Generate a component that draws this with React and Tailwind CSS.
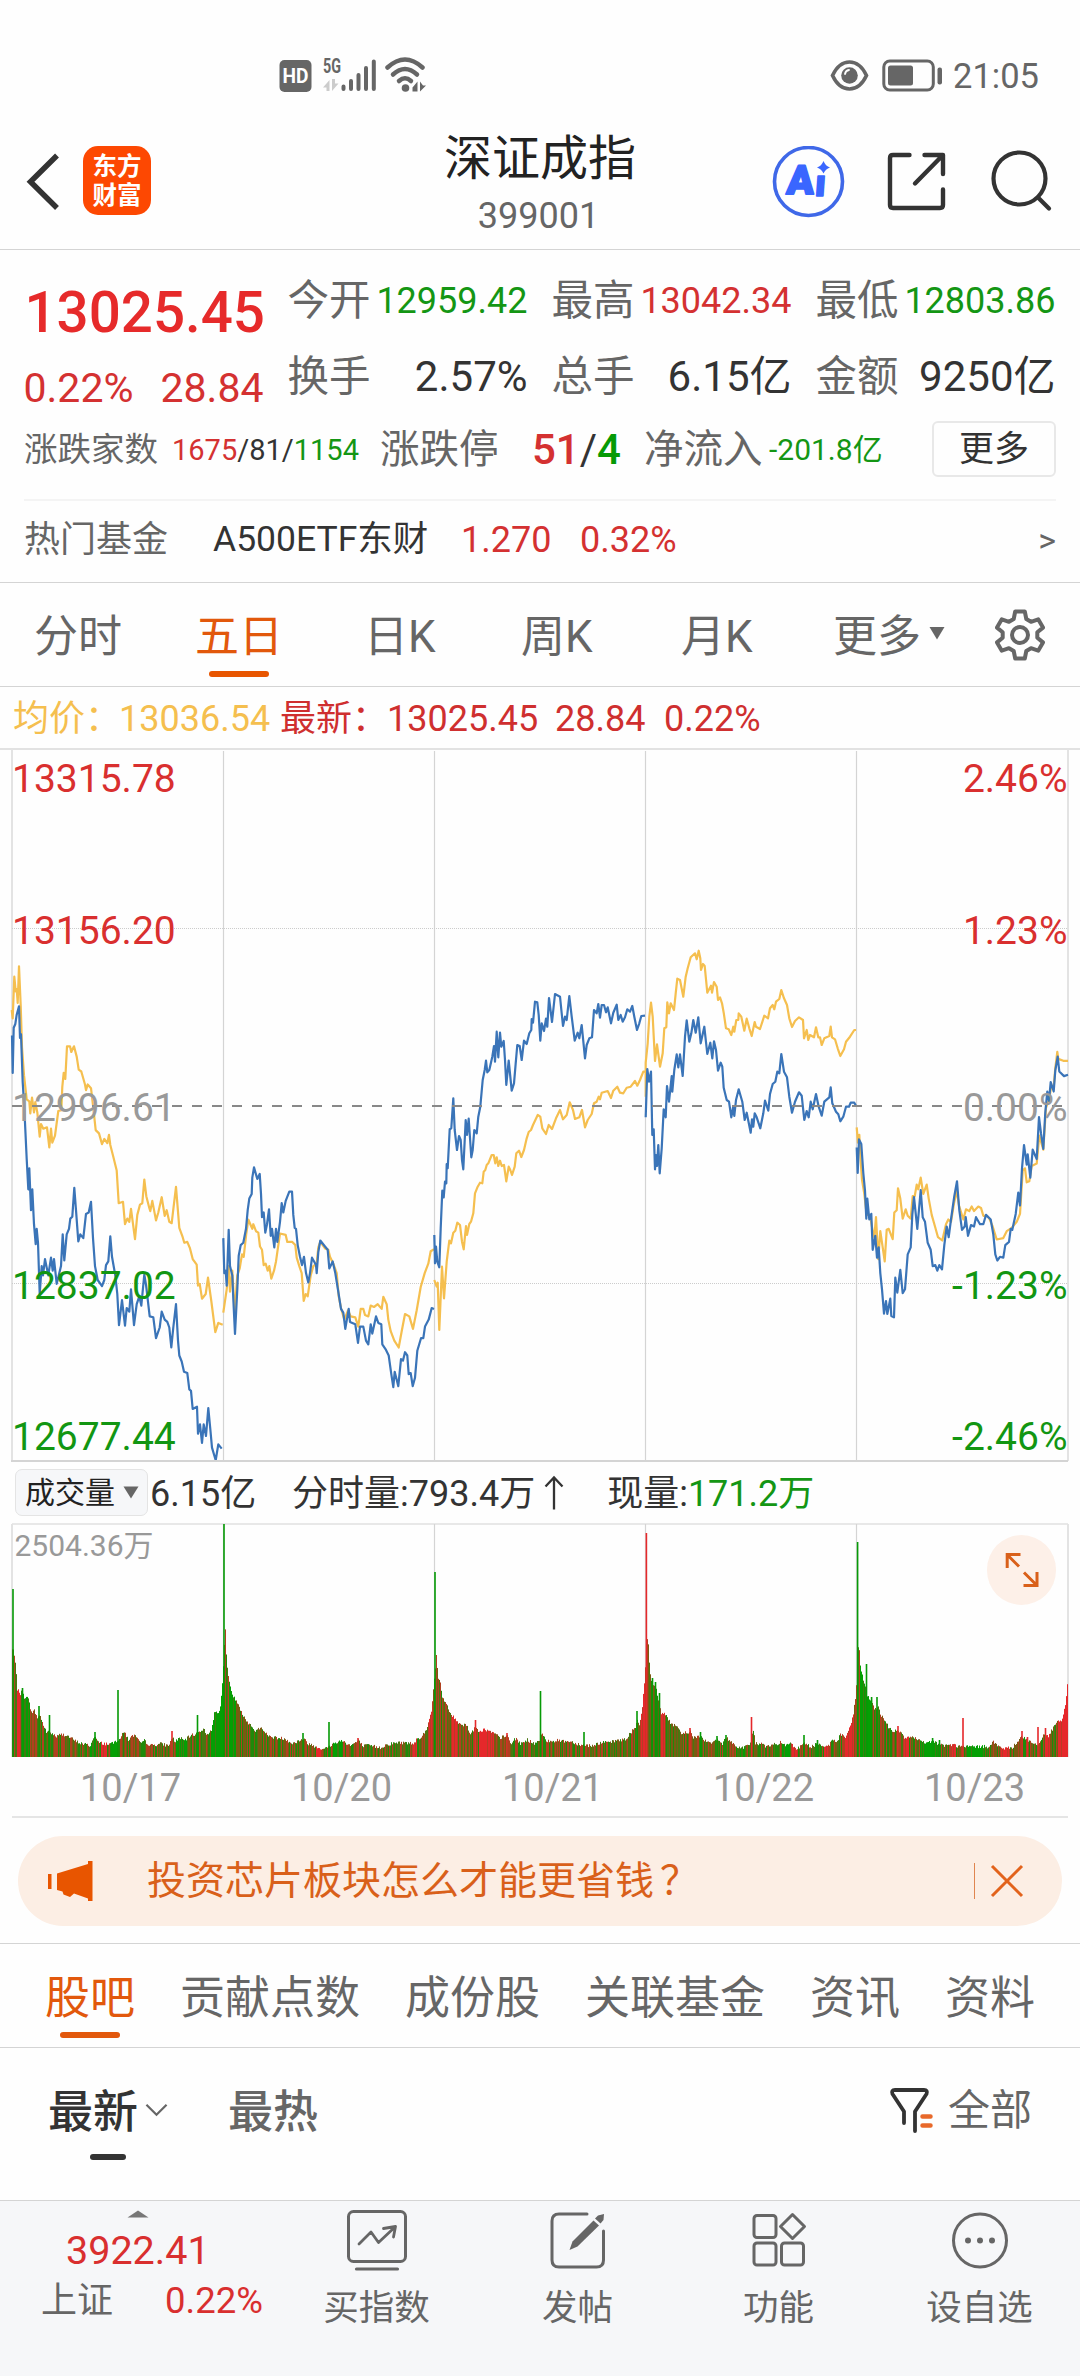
import React from "react";

/* ---------- chart data ---------- */

// Intraday series. Each group has its own sampling grid: [originX, originY, unitsPerPxX, unitsPerPxY].
const GRID_A = [0, 740, 3, 2.148];
const GRID_B = [420, 920, 3, 3];
const GRID_C = [840, 740, 3, 2.148];

const AVERAGE = [
  [GRID_A, "35,580 38,598 43,508 47,540 50,535 53,565 57,486 62,570 66,660 72,720 80,772 88,776 91,802 96,768 102,800 106,778 112,800 119,852 123,825 130,835 141,832 148,875 153,835 157,865 165,850 175,797 184,795 187,745 191,715 196,728 201,658 210,658 214,670 222,658 230,680 236,708 244,712 255,740 258,752 263,740 273,748 280,790 287,838 297,845 306,868 313,857 322,866 327,848 331,870 340,895 350,925 356,995 369,992 375,1040 382,1028 388,1035 393,1007 405,1072 412,1020 420,998 427,995 433,944 439,980 448,1005 451,1012 457,990 468,1032 475,1015 485,982 494,1022 500,1010 508,1035 515,1038 520,1008 528,960 538,1048 548,1068 553,1080 562,1078 570,1092 578,1115 590,1127 594,1172 599,1168 606,1200 617,1190 624,1155 634,1205 646,1272 655,1252 668,1256"],
  [GRID_A, "670,1230 680,1180 686,1130 690,1185 697,1140 704,1230 712,1150 719,1135 726,1105 731,1110 739,1060 745,1030 751,1040 757,1050 760,1040 768,1055 775,1058 780,1088 786,1095 791,1128 797,1125 803,1140 808,1130 814,1157 822,1140 828,1120 834,1090 840,1060 857,1063 862,1078 877,1078 886,1085 890,1112 898,1130 905,1145 911,1205 917,1190 923,1195 932,1150 940,1130 950,1125 955,1090 961,1078 975,1092 985,1095 990,1110 1000,1125 1010,1145 1016,1195 1023,1220 1033,1245 1044,1225 1052,1238 1066,1240 1075,1260 1082,1222 1090,1222 1095,1235 1105,1238 1112,1215 1122,1218 1133,1212 1145,1222 1150,1196 1160,1212 1165,1245 1172,1270 1183,1290 1196,1305 1205,1270 1215,1233 1228,1238 1239,1265 1250,1225 1262,1175 1274,1145 1285,1125 1292,1098 1302,1094"],
  [GRID_B, "43,1080 50,1100 53,1088 58,1230 66,1040 72,1135 80,1025 88,962 93,970 100,938 106,932 112,908 120,915 126,965 131,988 138,918 141,945 148,912 153,905 160,880 165,820 173,800 180,788 187,790 191,755 196,750 200,735 205,730 215,705 221,705 226,730 230,712 235,738 240,722 245,738 252,735 259,784 266,740 271,750 276,765 284,740 289,700 297,692 304,711 312,690 320,655 326,636 333,630 339,615 353,585 361,590 367,625 378,642 386,615 396,627 408,595 420,570 429,598 440,585 449,547 459,570 465,597 478,592 486,570 495,622 503,600 515,582 522,550 530,545 536,530 540,538 545,518 563,513 573,534 580,512 592,500 600,518 610,520 620,503 632,500 645,483 652,497 660,480 670,455 676,455"],
  [GRID_B, "677,530 677,428 683,370 688,290 693,248 698,290 705,423 711,373 720,440 728,400 733,325 739,322 742,247 747,280 752,250 762,270 767,220 772,176 780,180 790,230 797,170 803,145 812,112 825,100 830,118 836,92 841,115 843,150 849,132 854,138 862,218 873,197 876,218 882,186 890,200 894,240 900,232 906,250 911,278 918,325 926,328 934,345 940,320 943,335 949,300 955,300 956,280 964,290 973,332 980,296 988,325 995,348 1004,306 1008,320 1020,327 1033,287 1044,295 1050,265 1058,255 1063,268 1068,245 1078,237 1084,210 1092,235 1101,255 1108,295 1116,321 1125,303 1137,292 1149,300 1152,355 1160,330 1165,360 1170,345 1182,352 1188,322 1195,352 1200,352 1205,375 1213,355 1228,348 1232,320 1236,352 1245,358 1253,385 1261,408 1272,388 1278,365 1290,350 1303,330 1308,330"],
  [GRID_C, "50,832 54,865 58,848 62,905 66,945 73,975 80,1020 90,1020 98,1055 103,1068 108,1025 115,1115 121,1055 128,1090 134,1120 140,1052 146,1050 158,1072 163,1015 170,1010 174,963 181,985 188,1028 197,1008 203,1022 212,1028 218,980 224,980 230,955 235,965 242,940 250,975 260,955 266,985 275,1020 285,1045 294,1068 307,1075 318,1040 325,1030 333,1035 342,995 350,968 357,1000 370,1030 378,1008 388,1012 395,1002 402,1012 415,1002 423,1005 430,1022 440,1022 448,1028 458,1045 470,1073 490,1070 500,1055 515,1048 530,1035 540,1018 548,925 555,920 560,950 568,948 575,915 590,910 598,850 610,880 618,790 628,770 634,742 641,745 646,705 652,670 655,685 670,689 684,689"],
];

const PRICE = [
  [GRID_A, "36,635 38,715 41,618 46,610 50,590 57,572 60,640 63,632 68,735 73,790 80,900 85,965 88,920 93,1010 97,965 102,1040 107,1083 110,1050 114,1080 119,1190 125,1130 129,1150 135,1115 145,1150 153,1112 158,1140 162,1115 170,1168 183,1130 188,1062 193,1118 200,1062 207,1050 211,1028 217,1024 223,962 228,1010 235,1077 241,1062 250,1070 258,1018 266,1015 273,992 279,1070 285,1130 293,1160 306,1173 313,1160 318,1128 325,1120 331,1066 336,1110 346,1150 352,1190 357,1257 366,1203 375,1258 380,1220 388,1228 393,1180 402,1257 410,1212 418,1195 424,1215 433,1148 438,1170 449,1238 460,1240 468,1285 479,1262 485,1228 494,1245 502,1250 508,1262 514,1305 520,1262 528,1212 534,1290 538,1322 545,1335 552,1357 562,1360 568,1395 573,1398 578,1437 591,1432 594,1490 600,1470 606,1510 611,1470 618,1495 625,1435 631,1480 636,1520 647,1547 655,1513 665,1522"],
  [GRID_A, "670,1070 673,1145 677,1140 680,1172 686,1052 690,1130 697,1150 700,1200 705,1276 712,1180 716,1108 722,1085 730,1080 738,1050 743,1010 748,985 755,975 757,940 762,918 772,943 779,932 783,975 786,1025 791,1015 796,1058 801,1040 807,1008 812,1065 816,1050 823,1090 828,1050 832,1078 840,1035 845,995 850,1015 857,990 868,970 876,970 880,1020 884,1048 888,1050 893,1085 900,1110 906,1128 912,1110 918,1145 925,1165 930,1145 936,1112 948,1128 950,1145 955,1100 961,1075 975,1088 983,1095 988,1135 998,1120 1006,1145 1015,1185 1023,1222 1030,1230 1036,1265 1046,1222 1050,1250 1066,1255 1074,1295 1080,1260 1090,1260 1098,1290 1105,1298 1112,1255 1117,1275 1128,1238 1135,1252 1144,1255 1147,1298 1158,1310 1166,1322 1174,1362 1180,1390 1184,1357 1195,1388 1203,1330 1209,1333 1215,1315 1222,1322 1226,1362 1232,1360 1238,1388 1245,1370 1252,1312 1263,1285 1270,1285 1275,1260 1286,1245 1295,1220 1302,1222"],
  [GRID_B, "43,945 45,1030 48,980 52,1025 58,1042 62,925 67,812 71,832 75,785 79,790 80,732 83,745 89,628 94,625 100,535 104,630 111,690 117,648 122,660 126,720 130,748 137,600 141,645 146,596 154,712 158,690 163,630 170,640 175,590 181,560 188,480 194,450 198,422 202,457 208,450 217,410 222,378 225,425 230,335 235,412 240,338 244,380 251,363 255,420 259,495 266,422 275,512 282,490 287,430 292,375 299,378 305,420 312,362 320,372 328,340 334,330 335,297 339,308 345,245 352,247 356,285 361,362 365,310 372,333 378,296 382,320 387,234 396,306 405,222 420,230 425,280 429,318 435,290 440,300 448,228 455,290 464,362 473,338 478,355 485,315 495,415 500,375 508,355 516,352 522,270 530,280 535,252 540,293 545,255 552,255 558,277 563,262 573,310 580,278 590,254 595,300 602,285 608,305 615,292 622,268 630,275 637,258 643,290 651,330 658,310 664,288 675,287"],
  [GRID_B, "677,592 682,447 687,485 693,455 697,645 701,628 705,748 708,705 711,738 715,675 719,760 725,685 731,568 737,592 741,498 747,545 755,468 757,515 763,450 770,403 775,442 780,403 788,468 795,350 800,301 808,365 814,340 820,300 827,338 835,292 842,370 853,320 862,402 871,368 877,415 882,364 888,390 894,452 902,428 907,440 911,503 920,540 927,545 934,592 940,558 943,588 948,540 956,508 967,545 974,600 980,578 992,638 996,598 1000,620 1004,580 1010,592 1021,625 1030,580 1035,542 1045,572 1050,522 1058,492 1066,485 1072,455 1078,460 1084,402 1092,455 1101,472 1108,530 1116,578 1125,545 1137,517 1145,527 1153,600 1160,573 1166,592 1172,545 1178,568 1188,522 1196,560 1205,587 1213,545 1228,532 1232,502 1237,550 1248,575 1255,583 1261,604 1270,590 1278,560 1287,560 1292,548 1303,548 1308,557"],
  [GRID_C, "50,875 53,930 57,858 64,868 70,930 75,968 79,1028 82,985 88,1030 94,1018 98,1095 106,1065 111,1112 116,1090 121,1145 126,1180 132,1232 138,1205 142,1233 151,1200 154,1237 162,1240 166,1155 172,1187 181,1138 188,1188 195,1180 203,1105 212,1090 217,1020 222,982 232,1050 242,967 248,1025 255,1035 263,1080 272,1095 278,1130 286,1128 292,1140 298,1128 306,1137 313,1085 320,1045 326,1068 333,1030 343,980 351,948 358,1010 366,1052 374,1045 377,1025 384,1065 393,1042 402,1045 408,1025 420,1040 430,1040 438,1020 452,1030 460,1062 466,1105 472,1118 480,1110 490,1112 496,1085 507,1078 512,1050 517,1052 527,1018 535,972 540,1000 546,920 552,870 560,912 563,890 571,940 578,880 590,900 597,810 603,845 610,878 616,800 622,755 627,775 632,735 641,755 646,710 653,680 658,712 672,722 684,719"],
];

const toPoints = ([[ox, oy, sx, sy], raw]) =>
  raw
    .split(" ")
    .map((p) => {
      const [x, y] = p.split(",").map(Number);
      return `${(ox + x / sx).toFixed(1)},${(oy + y / sy).toFixed(1)}`;
    })
    .join(" ");

// Volume outline: [x, height], followed by single-minute spikes [x, height, colour].
const VOLUME = [
  [13, 108], [14.5, 98], [16, 85], [17, 68], [20, 64], [22, 67], [24, 60], [26, 62], [28, 58], [30, 50], [32, 45], [34, 47], [37, 40], [40, 42], [43, 32], [46, 26], [52, 24], [56, 21], [60, 23], [65, 23], [70, 20], [76, 16], [82, 14], [90, 12], [94, 22], [98, 15], [105, 14], [112, 14], [120, 20], [124, 26], [128, 18], [134, 23], [140, 14], [144, 17], [150, 12], [160, 14], [168, 12], [172, 20], [175, 16], [179, 20], [184, 17], [190, 22], [196, 24], [203, 29], [206, 24], [211, 26], [214, 45], [218, 46], [220, 51], [222, 73],
  [225, 130], [226, 102], [228, 80], [230, 70], [232, 62], [236, 57], [240, 47], [245, 38], [250, 33], [255, 27], [262, 30], [267, 22], [275, 20], [285, 19], [292, 14], [303, 19], [308, 14], [316, 11], [322, 9], [328, 10], [331, 13], [340, 17], [344, 16], [350, 12], [358, 17], [362, 12], [370, 12], [380, 10], [386, 13], [396, 15], [405, 15], [413, 14], [417, 20], [420, 20], [425, 26], [429, 38], [431, 47], [433, 68],
  [436, 102], [437, 91], [438, 78], [440, 74], [442, 60], [446, 54], [450, 44], [457, 36], [462, 33], [466, 33], [470, 24], [475, 30], [478, 27], [485, 28], [492, 25], [500, 20], [507, 22], [510, 14], [515, 19], [520, 14], [527, 18], [533, 14], [539, 17], [542, 24], [545, 17], [560, 17], [571, 16], [580, 13], [592, 12], [600, 15], [609, 15], [619, 18], [626, 18], [630, 25], [635, 30], [637, 38], [639, 34], [642, 50], [644.5, 82],
  [647.5, 124], [648.5, 100], [650, 83], [651, 76], [654, 72], [656, 68], [658, 57], [661, 45], [664, 44], [667, 41], [670, 34], [676, 31], [681, 24], [690, 26], [693, 20], [700, 22], [705, 17], [710, 15], [717, 19], [722, 14], [726, 20], [732, 15], [736, 11], [742, 10], [750, 14], [753, 28], [755, 14], [760, 14], [767, 11], [780, 15], [786, 12], [790, 14], [796, 9], [804, 14], [811, 11], [817, 14], [825, 12], [829, 12], [831, 18], [837, 16], [840, 24], [845, 20], [848, 27], [851, 33], [853, 44], [855.5, 63],
  [858.5, 118], [859.5, 96], [861, 87], [863, 78], [865, 70], [867, 62], [870, 58], [874, 48], [878, 50], [881, 42], [884, 38], [888, 31], [893, 26], [898, 28], [901, 24], [905, 19], [911, 21], [917, 18], [925, 14], [932, 17], [937, 14], [945, 12], [952, 13], [960, 11], [975, 11], [987, 11], [993, 16], [998, 11], [1005, 9], [1012, 10], [1016, 15], [1021, 22], [1025, 18], [1029, 17], [1033, 13], [1037, 12], [1040, 17], [1044, 24], [1048, 22], [1052, 28], [1056, 35], [1060, 36], [1063, 42], [1065, 53], [1067, 73],
];
const GREEN = "#069a06";
const RED = "#e5282b";
const SPIKES = [
  [13, 168, GREEN], [22.5, 69, GREEN], [39, 51, GREEN], [49.5, 42, GREEN], [118, 67, GREEN], [95, 25, GREEN], [172, 26, RED], [197.5, 42, GREEN],
  [224, 233, GREEN], [303, 24, GREEN], [329, 35, GREEN], [358, 19, RED],
  [435, 185, GREEN], [475.5, 37, RED], [507, 24, RED], [540.5, 66, GREEN], [584, 25, GREEN], [637, 46, GREEN],
  [646.4, 224, RED], [652.5, 79, GREEN], [655.5, 75, GREEN], [659.5, 64, GREEN], [690, 29, RED], [700.5, 25, GREEN], [717, 21, GREEN], [726, 22, GREEN], [751.5, 40, RED], [804, 22, GREEN], [817.5, 17, GREEN],
  [857.6, 215, GREEN], [866.5, 93, GREEN], [871.6, 60, GREEN], [877, 60, GREEN], [898, 31, RED], [932.6, 19, GREEN], [939.5, 17, GREEN], [963, 39, RED], [1022, 26, RED], [1027.5, 20, RED], [1038, 30, RED], [1045.5, 29, RED],
];
// Stretches where one direction dominates.
const RED_RUNS = [[17, 20], [101, 106], [316, 320], [412, 416], [428, 432], [452, 457], [479, 493], [641, 645], [660, 664], [791, 797], [824, 828], [845, 853], [903, 908], [950, 955], [1001, 1008], [1045, 1049], [1058, 1068]];
const GREEN_RUNS = [[21, 29], [90, 94], [111, 117], [176, 186], [211, 223], [229, 235], [333, 341], [736, 744], [782, 790], [860, 870], [920, 936], [966, 984]];

const inRun = (runs, x) => runs.some(([a, b]) => x >= a && x <= b);

function volumeBars() {
  const bars = [];
  let seed = 7;
  const rand = () => {
    seed = (seed * 1103515245 + 12345) % 2147483648;
    return seed / 2147483648;
  };
  let k = 0;
  for (let x = 12; x < 1068; x += 1) {
    while (k < VOLUME.length - 2 && VOLUME[k + 1][0] <= x) k += 1;
    const [x0, h0] = VOLUME[k];
    const [x1, h1] = VOLUME[k + 1];
    const t = Math.max(0, Math.min(1, (x - x0) / (x1 - x0)));
    const h = h0 + (h1 - h0) * t - 1 + (rand() - 0.4) * 3.5;
    const r = rand();
    let color = r < 0.28 ? "#1f8a0a" : r < 0.55 ? "#b0401f" : r < 0.82 ? "#7a5a12" : "#4a7610";
    if (inRun(RED_RUNS, x)) color = r < 0.65 ? RED : "#b83c26";
    if (inRun(GREEN_RUNS, x)) color = r < 0.75 ? "#049f04" : "#3f7a10";
    bars.push([x, h, color]);
  }
  return bars;
}
const BARS = volumeBars();
const DAY_LINES = [223.5, 434.5, 645.5, 856.5];

/* ---------- status bar ---------- */

function StatusBar() {
  return (
    <div className="flex h-[100px] items-start pt-[51px]">
      <svg className="ml-[279px] mt-[6px] h-[36px] w-[34px]" viewBox="0 0 34 36">
        <rect x="0.5" y="3" width="32" height="32" rx="5" fill="#666" />
        <text x="16.5" y="26" textAnchor="middle" fontSize="20" fontWeight="700" fill="#fff" fontFamily="Roboto, sans-serif" textLength="26" lengthAdjust="spacingAndGlyphs">HD</text>
      </svg>
      <svg className="ml-[9px] h-[42px] w-[56px]" viewBox="0 -6 56 42">
        <text x="1" y="15.500" fontSize="20" fontWeight="700" fill="#666" fontFamily="Roboto, sans-serif" textLength="18" lengthAdjust="spacingAndGlyphs">5G</text>
        <path d="M7.500 34V23L1 30.500H4.500V34ZM10 22V34L16.500 26.500H13V22Z" fill="#ccc" />
        <g stroke="#666" strokeWidth="4" strokeLinecap="round">
          <path d="M21.500 29.500V32M29 24V32M36.500 18V32M44 11V32M51.800 4.500V32" />
        </g>
      </svg>
      <svg className="ml-[7px] mt-[6px] h-[36px] w-[42px]" viewBox="0 0 42 36">
        <g fill="none" stroke="#666" strokeWidth="4.500" strokeLinecap="round">
          <path d="M2.500 10.500Q20 -5.500 37.500 10.500" />
          <path d="M8 17.500Q20 6.500 32 17.500" />
          <path d="M14 24Q20 18.500 26 24" />
        </g>
        <circle cx="20.500" cy="31" r="3.800" fill="#666" />
        <path d="M32.500 34.500V24.500L27.500 30.500V34.500ZM35 24.500V34.500L41 28.500H38Z" fill="#666" />
      </svg>
      <svg className="ml-[402px] mt-[6px] h-[36px] w-[42px]" viewBox="0 0 42 36">
        <path d="M3.500 18.500C12 0.500 29 0.500 37.500 18.500C29 36.500 12 36.500 3.500 18.500Z" fill="none" stroke="#666" strokeWidth="3.600" />
        <circle cx="20.500" cy="18.500" r="8.300" fill="#666" />
        <path d="M16 17Q16.500 13.500 20 13" stroke="#fff" strokeWidth="1.800" fill="none" strokeLinecap="round" />
      </svg>
      <svg className="ml-[11px] mt-[6px] h-[36px] w-[62px]" viewBox="0 0 62 36">
        <rect x="1.800" y="4" width="49.500" height="29" rx="6" fill="none" stroke="#666" strokeWidth="3" />
        <rect x="6" y="8.500" width="25" height="20" rx="2.500" fill="#666" />
        <rect x="55.500" y="10.500" width="4.500" height="17" rx="2" fill="#666" />
      </svg>
      <span className="ml-[9px] mt-[7px] text-[34.500px] leading-[36px] text-[#666]">21:05</span>
    </div>
  );
}

/* ---------- title bar ---------- */

function TitleBar() {
  return (
    <div className="flex h-[150px] border-b border-[#d4d4d4]">
      <div className="flex w-[360px] items-start pt-[46px]">
        <svg className="ml-[25px] mt-[7px] h-[58px] w-[36px]" viewBox="0 0 36 58" fill="none" stroke="#333" strokeWidth="5.500" strokeLinecap="butt" strokeLinejoin="miter">
          <path d="M32 2.500L5.500 28.800L32 55" />
        </svg>
        <div className="ml-[22px] flex h-[69px] w-[68px] flex-col items-center justify-center rounded-[15px] bg-[#fd4802] pt-px text-[24.500px] font-bold leading-[29px] text-white">
          <span>东方</span>
          <span>财富</span>
        </div>
      </div>
      <div className="flex w-[360px] flex-col items-center">
        <span className="mt-[35px] text-[48px] leading-[48px] text-[#222]">深证成指</span>
        <span className="mt-[15px] -ml-[3px] text-[36px] leading-[36px] text-[#666]">399001</span>
      </div>
      <div className="flex w-[360px] items-start pt-[46px]">
        <svg className="ml-[52px] h-[73px] w-[74px]" viewBox="0 0 74 73">
          <circle cx="36.500" cy="35.500" r="34" fill="none" stroke="#3f68e8" strokeWidth="3.600" />
          <g transform="translate(14 48) skewX(-4)">
            <text x="0" y="0" fontSize="40" fontWeight="900" fill="#3a66ff" stroke="#3a66ff" strokeWidth="2" strokeLinejoin="round" fontFamily="Roboto, sans-serif">A</text>
            <text x="28.500" y="2" fontSize="38" fontWeight="900" fill="#3a66ff" stroke="#3a66ff" strokeWidth="1.500" strokeLinejoin="round" fontFamily="Roboto, sans-serif">ı</text>
          </g>
          <path d="M51.500 15Q53.500 20 58 21.500Q53.500 23 51.500 27.500Q49.500 23 45 21.500Q49.500 20 51.500 15Z" fill="#3a66ff" />
        </svg>
        <svg className="ml-[39px] mt-[4px] h-[64px] w-[64px]" viewBox="0 0 64 64" fill="none" stroke="#333" strokeWidth="4.400" strokeLinecap="round" strokeLinejoin="round">
          <path d="M24.500 5H8Q5 5 5 8V55Q5 58 8 58H55Q58 58 58 55V39.500" />
          <path d="M39.500 5H58V24M56.500 6.500L30 33.500" />
        </svg>
        <svg className="ml-[37px] mt-[2px] h-[66px] w-[66px]" viewBox="0 0 66 66" fill="none" stroke="#333" strokeWidth="4.200" strokeLinecap="round">
          <circle cx="33.500" cy="30.500" r="26" />
          <path d="M52 49.500L63 60.500" />
        </svg>
      </div>
    </div>
  );
}

/* ---------- quote ---------- */

function Stat({ label, children, tone, small }) {
  return (
    <div className="flex h-[76px] items-center justify-between whitespace-nowrap leading-none">
      <span className="-ml-px text-[41.500px] text-[#666]">{label}</span>
      <span className={(small ? "text-[36px] " : "text-[42px] ") + tone}>{children}</span>
    </div>
  );
}

function Quote() {
  return (
    <div className="h-[332px] leading-none whitespace-nowrap">
      <div className="grid h-[171px] grid-cols-4 gap-x-[25px] px-[24.500px]">
        <div className="pt-[25px]">
          <div className="flex h-[76px] items-center text-[56.500px] font-medium text-[#e62a2a]">13025.45</div>
          <div className="flex h-[75px] items-center justify-between text-[41px] text-[#d43131]">
            <span className="-ml-px">0.22%</span>
            <span>28.84</span>
          </div>
        </div>
        <div className="pt-[13px]">
          <Stat label="今开" tone="text-[#149614]" small>12959.42</Stat>
          <Stat label="换手" tone="text-[#333]">2.57%</Stat>
        </div>
        <div className="pt-[13px]">
          <Stat label="最高" tone="text-[#d43131]" small>13042.34</Stat>
          <Stat label="总手" tone="text-[#333]">6.15亿</Stat>
        </div>
        <div className="pt-[13px]">
          <Stat label="最低" tone="text-[#149614]" small>12803.86</Stat>
          <Stat label="金额" tone="text-[#333]">9250亿</Stat>
        </div>
      </div>
      <div className="flex h-[56px] items-center pl-[24px] pr-[24px]">
        <span className="mt-[2px] w-[148px] text-[33.500px] text-[#666]">涨跌家数</span>
        <span className="mt-[2px] w-[208px] text-[29px] text-[#333]">
          <span className="text-[#d43131]">1675</span>/81/<span className="text-[#149614]">1154</span>
        </span>
        <span className="mt-[2px] w-[152px] text-[39.500px] text-[#666]">涨跌停</span>
        <span className="mt-[2px] w-[112px] text-[42px] font-medium text-[#333]">
          <span className="text-[#d43131]">51</span><span className="font-normal">/</span><span className="text-[#069a06]">4</span>
        </span>
        <span className="mt-[2px] w-[125px] text-[39.500px] text-[#666]">净流入</span>
        <span className="mt-[2px] text-[30px] text-[#149614]">-201.8亿</span>
        <span className="ml-auto flex h-[56px] w-[124px] items-center justify-center rounded-[6px] border-2 border-[#e8e8e8] text-[35px] text-[#333]">更多</span>
      </div>
      <div className="mx-[24px] mt-[22px] h-[2px] bg-[#f4f4f4]" />
      <div className="flex h-[78px] items-center pl-[24px] pr-[24px] text-[36px]">
        <span className="w-[189px] text-[#666]">热门基金</span>
        <span className="w-[248px] text-[35.500px] text-[#333]">A500ETF东财</span>
        <span className="w-[119px] text-[#d43131]">1.270</span>
        <span className="text-[#d43131]">0.32%</span>
        <span className="ml-auto text-[34px] text-[#666]">&gt;</span>
      </div>
    </div>
  );
}

/* ---------- period tabs ---------- */

function Gear() {
  return (
    <svg className="h-[56px] w-[56px]" viewBox="0 0 56 56" fill="none" stroke="#666" strokeWidth="4" strokeLinejoin="round">
      <path d="M23.200 4.500H32.800L34.300 12L39 14.800L46.200 12.300L51 20.600L45.300 25.300V30.700L51 35.400L46.200 43.700L39 41.200L34.300 44L32.800 51.500H23.200L21.700 44L17 41.200L9.800 43.700L5 35.400L10.700 30.700V25.300L5 20.600L9.800 12.300L17 14.800L21.700 12Z" />
      <circle cx="28" cy="28" r="8" />
    </svg>
  );
}

function PeriodTabs() {
  return (
    <div className="flex h-[105px] items-center border-y border-[#d4d4d4] pt-[4px] text-[44px] leading-none text-[#666] whitespace-nowrap">
      <span className="ml-[34px] w-[161px]">分时</span>
      <span className="relative w-[169px] text-[#e2580c]">
        五日
        <span className="absolute left-[14px] top-[56px] h-[6px] w-[60px] rounded-full bg-[#e85500]" />
      </span>
      <span className="w-[157px]">日K</span>
      <span className="w-[160px]">周K</span>
      <span className="w-[152px]">月K</span>
      <span className="w-[96px]">更多</span>
      <svg className="mb-[7px] h-[14px] w-[16px]" viewBox="0 0 16 14"><path d="M0.500 1H15.500L8 13.500Z" fill="#666" /></svg>
      <div className="mb-[4px] ml-[47px]"><Gear /></div>
    </div>
  );
}

/* ---------- charts ---------- */

const LEVELS = [
  ["13315.78", "2.46%", 792, "#d92f2f"],
  ["13156.20", "1.23%", 943.5, "#d92f2f"],
  ["12996.61", "0.00%", 1121, "#999"],
  ["12837.02", "-1.23%", 1299, "#129612"],
  ["12677.44", "-2.46%", 1449.5, "#129612"],
];

function PriceChart() {
  return (
    <svg className="block h-[714px] w-[1080px]" viewBox="0 748 1080 714" fontFamily="Roboto, sans-serif">
      <path d="M0 749H1080" stroke="#d9d9d9" strokeWidth="1.500" />
      <path d="M12 749V1461M1068 749V1461" stroke="#e3e3e3" strokeWidth="2" />
      <g stroke="#d4d4d4" strokeWidth="1.200">
        {DAY_LINES.map((x) => <path key={x} d={`M${x} 751V1461`} />)}
      </g>
      <path d="M12 928.500H1068M12 1283.500H1068" stroke="#ccc" strokeWidth="1" strokeDasharray="1 1" />
      <g fill="none" strokeWidth="2.200" strokeLinejoin="round">
        {AVERAGE.map((s, i) => <polyline key={i} points={toPoints(s)} stroke="#f5bf4f" />)}
        {PRICE.map((s, i) => <polyline key={i} points={toPoints(s)} stroke="#3a74b8" />)}
      </g>
      <path d="M12 1106H1068" stroke="#888" strokeWidth="1.800" strokeDasharray="10 10" />
      <path d="M11 1461H1068" stroke="#d4d4d4" strokeWidth="2" />
      {LEVELS.map(([price, pct, y, fill]) => (
        <g key={price} fill={fill} fontSize="39">
          <text x="12" y={y}>{price}</text>
          <text x="1067.500" y={y} textAnchor="end">{pct}</text>
        </g>
      ))}
    </svg>
  );
}

function VolumeHeader() {
  return (
    <div className="flex h-[61px] items-center text-[36px] leading-none text-[#333] whitespace-nowrap">
      <span className="ml-[15px] flex h-[47px] w-[133px] items-center justify-between rounded-[7px] border border-[#e4e4e4] bg-[#f6f7f9] pl-[9px] pr-[8px] text-[30px] text-[#222]">
        成交量
        <svg className="h-[13px] w-[16px]" viewBox="0 0 16 13"><path d="M0.500 0.500H15.500L8 12.500Z" fill="#666" /></svg>
      </span>
      <span className="ml-[2px] mt-[2px] w-[142px]">6.15亿</span>
      <span className="mt-[2px]">分时量:793.4万</span>
      <svg className="ml-[8px] h-[36px] w-[22px]" viewBox="0 0 22 36" fill="none" stroke="#333" strokeWidth="2.300">
        <path d="M11 34.500V3M2.500 11.500L11 2.500L19.500 11.500" />
      </svg>
      <span className="ml-[42px] mt-[2px]">现量:<span className="text-[#149614]">171.2万</span></span>
    </div>
  );
}

function VolumeChart() {
  return (
    <div className="relative h-[234px]">
      <svg className="block h-[234px] w-[1080px]" viewBox="0 1523 1080 234" fontFamily="Roboto, 'Noto Sans CJK SC', sans-serif">
        <path d="M12 1524H1068" stroke="#e0e0e0" strokeWidth="1.500" />
        <path d="M12 1524V1757M1068 1524V1757" stroke="#e3e3e3" strokeWidth="2" />
        <g stroke="#d4d4d4" strokeWidth="1.200">
          {DAY_LINES.map((x) => <path key={x} d={`M${x} 1524V1757`} />)}
        </g>
        {BARS.map(([x, h, fill]) => <rect key={x} x={x} y={1757 - h} width="1" height={h} fill={fill} />)}
        {SPIKES.map(([x, h, fill]) => <rect key={x} x={x - 0.8} y={1757 - h} width="1.600" height={h} fill={fill} />)}
        <text x="14.500" y="1556" fontSize="30" fill="#999">2504.36万</text>
      </svg>
      <div className="absolute right-[24px] top-[12px] flex h-[70px] w-[69px] items-center justify-center rounded-full bg-[#fdf0e8]">
        <svg className="h-[36px] w-[36px]" viewBox="0 0 36 36" fill="none" stroke="#d9601a" strokeWidth="3">
          <path d="M16.500 2.500H3.200V16M4 3.500L15 14.500M20 20.500L31.500 32M19.500 33.500H33V20" />
        </svg>
      </div>
    </div>
  );
}

/* ---------- promo and lower tabs ---------- */

function Promo() {
  return (
    <div className="mx-[18px] mt-[18px] flex h-[90px] items-center rounded-full bg-[#fceee4] leading-none">
      <svg className="ml-[29px] h-[42px] w-[46px]" viewBox="0 0 46 42" fill="#e85500">
        <path d="M1 14H4.500V29H1ZM10 13.500L41 4V1H45.500V41H41V38.500L27 33.500L23 37L16.500 34.500L15.500 31.500L10 30Z" />
      </svg>
      <span className="ml-[54px] text-[39px] text-[#d9601a]">投资芯片板块怎么才能更省钱<span className="ml-[6px]">？</span></span>
      <span className="ml-auto h-[36px] w-[1.500px] bg-[#e0854f]" />
      <svg className="ml-[15px] mr-[38px] h-[34px] w-[34px]" viewBox="0 0 34 34" fill="none" stroke="#e2631c" strokeWidth="3">
        <path d="M2 2L32 32M32 2L2 32" />
      </svg>
    </div>
  );
}

function SectionTabs() {
  return (
    <div className="mt-[17px] flex h-[105px] items-center gap-[45px] border-y border-[#d4d4d4] pl-[45px] pt-[6px] text-[45px] leading-none text-[#666] whitespace-nowrap">
      <span className="relative text-[#e2580c]">
        股吧
        <span className="absolute left-[15px] top-[56px] h-[6px] w-[60px] rounded-full bg-[#e2580c]" />
      </span>
      <span>贡献点数</span>
      <span>成份股</span>
      <span>关联基金</span>
      <span>资讯</span>
      <span>资料</span>
    </div>
  );
}

function PostFilter() {
  return (
    <div className="flex h-[152px] items-start pt-[42px] leading-none whitespace-nowrap">
      <span className="relative ml-[48px] text-[45px] font-medium text-[#333]">
        最新
        <span className="absolute left-[42px] top-[64px] h-[6px] w-[36px] rounded-full bg-[#333]" />
      </span>
      <svg className="ml-[7px] mt-[13px] h-[14px] w-[23px]" viewBox="0 0 24 14" fill="none" stroke="#666" strokeWidth="2.300"><path d="M1.500 1.500L12 12L22.500 1.500" /></svg>
      <span className="ml-[60px] text-[45px] font-medium text-[#666]">最热</span>
      <svg className="ml-auto -mt-[3px] h-[46px] w-[46px]" viewBox="0 0 46 46" fill="none">
        <path d="M15 36V24.500L3.500 7Q2 3 6 3H35Q39 3 37.500 7L26 24.500V44" stroke="#333" strokeWidth="3.800" strokeLinecap="round" strokeLinejoin="round" />
        <path d="M33.500 29.500H41.500M33.500 38.500H41.500" stroke="#e8692a" strokeWidth="4.500" strokeLinecap="round" />
      </svg>
      <span className="ml-[13px] mr-[48px] text-[42px] text-[#666]">全部</span>
    </div>
  );
}

/* ---------- bottom bar ---------- */

function NavItem({ label, children }) {
  return (
    <div className="flex w-[201px] flex-col items-center">
      <svg className="mt-[7px] h-[64px] w-[64px]" viewBox="0 0 64 64" fill="none" stroke="#666" strokeWidth="3" strokeLinecap="round" strokeLinejoin="round">
        {children}
      </svg>
      <span className="mt-[19px] text-[35.500px] text-[#666]">{label}</span>
    </div>
  );
}

function BottomBar() {
  return (
    <div className="flex h-[177px] border-t border-[#d4d4d4] bg-[#f6f7f9] leading-none whitespace-nowrap">
      <div className="w-[276px]">
        <svg className="ml-[127px] mt-[9px] h-[8px] w-[22px]" viewBox="0 0 22 8"><path d="M0.500 7.500L11 0.500L21.500 7.500Z" fill="#777" /></svg>
        <div className="mt-[13px] pl-[66px] text-[39.500px] text-[#d92f2f]">3922.41</div>
        <div className="mt-[12px] flex items-center">
          <span className="ml-[41px] w-[124px] text-[36px] text-[#666]">上证</span>
          <span className="text-[36.500px] text-[#d92f2f]">0.22%</span>
        </div>
      </div>
      <NavItem label="买指数">
        <rect x="3.500" y="3.500" width="57" height="50" rx="5" />
        <path d="M14 36L26 24L33.500 34.500L50 19M38.500 20.500L50.500 18.500L48.500 29" strokeWidth="2.800" />
        <path d="M11.500 61H52.500" strokeWidth="3.200" />
      </NavItem>
      <NavItem label="发帖">
        <path d="M41 6H13Q6 6 6 13V52Q6 59 13 59H50.500Q57.500 59 57.500 52V23" />
        <path d="M52 7.500L58 6L57.500 12L54.500 15.500L49 10.500Z" fill="#666" stroke="none" />
        <path d="M47.500 12.500L53 17.500L31.500 38.500L23.500 42L26.500 33.500Z" fill="#666" stroke="none" />
      </NavItem>
      <NavItem label="功能">
        <rect x="7" y="7.500" width="22" height="22" rx="3" />
        <rect x="7" y="35" width="22" height="22" rx="3" />
        <rect x="34.500" y="35" width="22" height="22" rx="3" />
        <path d="M45.500 6.500L57.500 18.500L45.500 30.500L33.500 18.500Z" />
      </NavItem>
      <NavItem label="设自选">
        <circle cx="32" cy="32.500" r="26.500" />
        <g fill="#666" stroke="none">
          <circle cx="20" cy="32.500" r="3" />
          <circle cx="32" cy="32.500" r="3" />
          <circle cx="44" cy="32.500" r="3" />
        </g>
      </NavItem>
    </div>
  );
}

export default function App() {
  return (
    <div className="h-[2376px] w-[1080px] overflow-hidden bg-[#fefefe] font-[Roboto,'Noto_Sans_CJK_SC',sans-serif]">
      <StatusBar />
      <TitleBar />
      <Quote />
      <PeriodTabs />
      <div className="flex h-[61px] items-center whitespace-nowrap pl-[13px] pt-[2px] text-[36px] leading-none">
        <span className="w-[267px] text-[#f5bf4f]">均价：<span className="-ml-[2px]">13036.54</span></span>
        <span className="w-[275px] text-[#cf2f2f]">最新：<span className="-ml-px">13025.45</span></span>
        <span className="w-[109px] text-[#cf2f2f]">28.84</span>
        <span className="text-[#cf2f2f]">0.22%</span>
      </div>
      <PriceChart />
      <VolumeHeader />
      <VolumeChart />
      <div className="mx-[12px] flex h-[61px] border-b-2 border-[#e5e5e5] pl-[13px] text-[38px] leading-[62px] text-[#999]">
        {["10/17", "10/20", "10/21", "10/22", "10/23"].map((d) => (
          <span key={d} className="w-[211px] shrink-0 text-center">{d}</span>
        ))}
      </div>
      <Promo />
      <SectionTabs />
      <PostFilter />
      <BottomBar />
    </div>
  );
}
